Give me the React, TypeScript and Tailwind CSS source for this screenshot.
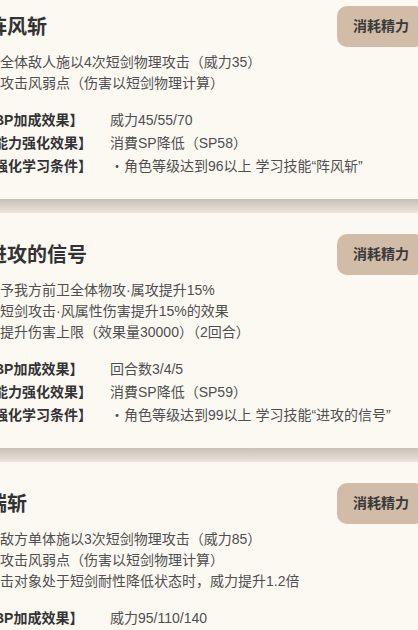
const SKILLS = [
  {
    name: "阵风斩",
    desc: ["对全体敌人施以4次短剑物理攻击（威力35）", "可攻击风弱点（伤害以短剑物理计算）"],
    rows: [
      ["【BP加成效果】", "威力45/55/70"],
      ["【能力强化效果】", "消費SP降低（SP58）"],
      ["【强化学习条件】", "・角色等级达到96以上 学习技能“阵风斩”"],
    ],
  },
  {
    name: "进攻的信号",
    desc: [
      "赋予我方前卫全体物攻·属攻提升15%",
      "及短剑攻击·风属性伤害提升15%的效果",
      "并提升伤害上限（效果量30000）（2回合）",
    ],
    rows: [
      ["【BP加成效果】", "回合数3/4/5"],
      ["【能力强化效果】", "消費SP降低（SP59）"],
      ["【强化学习条件】", "・角色等级达到99以上 学习技能“进攻的信号”"],
    ],
  },
  {
    name: "端斩",
    desc: [
      "对敌方单体施以3次短剑物理攻击（威力85）",
      "可攻击风弱点（伤害以短剑物理计算）",
      "攻击对象处于短剑耐性降低状态时，威力提升1.2倍",
    ],
    rows: [
      ["【BP加成效果】", "威力95/110/140"],
      ["【能力强化效果】", "消費SP降低（SP60）"],
      ["【强化学习条件】", "・角色等级达到100以上 学习技能“端斩”"],
    ],
  },
];

function SkillCard({ skill, first }: { skill: (typeof SKILLS)[number]; first: boolean }) {
  return (
    <div className={`bg-[#fcf9f3] pt-[21px] pb-[21px] ${first ? "-mt-[15px]" : ""}`}>
      <div className="flex h-[41px] items-center justify-between">
        <h2 className="ml-[1px] text-[20px] font-bold leading-none text-[#333]">{skill.name}</h2>
        <div className="flex h-[41px] w-[88px] items-center justify-center rounded-[10px] bg-[#d1bca8] text-[14px] font-bold text-[#3a3a3a]">
          消耗精力
        </div>
      </div>
      <div className="mt-[5px] text-[14px] leading-[21px] text-[#4f4f4f]">
        {skill.desc.map((line, i) => (
          <p key={i} className="whitespace-nowrap">{line}</p>
        ))}
      </div>
      <div className="-ml-[6px] mt-[15px] grid grid-cols-[130px_1fr] text-[14px] leading-[23px]">
        {skill.rows.map(([label, value], i) => (
          <div key={i} className="contents">
            <span className="whitespace-nowrap font-bold text-[#333]">{label}</span>
            <span className="whitespace-nowrap text-[#4f4f4f]">{value}</span>
          </div>
        ))}
      </div>
    </div>
  );
}

export default function App() {
  return (
    <div
      className="h-[630px] w-[418px] overflow-hidden bg-[#fcf9f3]"
      style={{ fontFamily: '"Liberation Sans", "Noto Sans CJK SC", sans-serif' }}
    >
      <div className="-ml-[14px] w-[439px]">
        {SKILLS.map((skill, i) => (
          <div key={skill.name}>
            {i > 0 && <div className="-ml-[20px] h-[14px] w-[480px] bg-gradient-to-b from-[#c6c0b5] to-[#ebe5db]" />}
            <SkillCard skill={skill} first={i === 0} />
          </div>
        ))}
      </div>
    </div>
  );
}
